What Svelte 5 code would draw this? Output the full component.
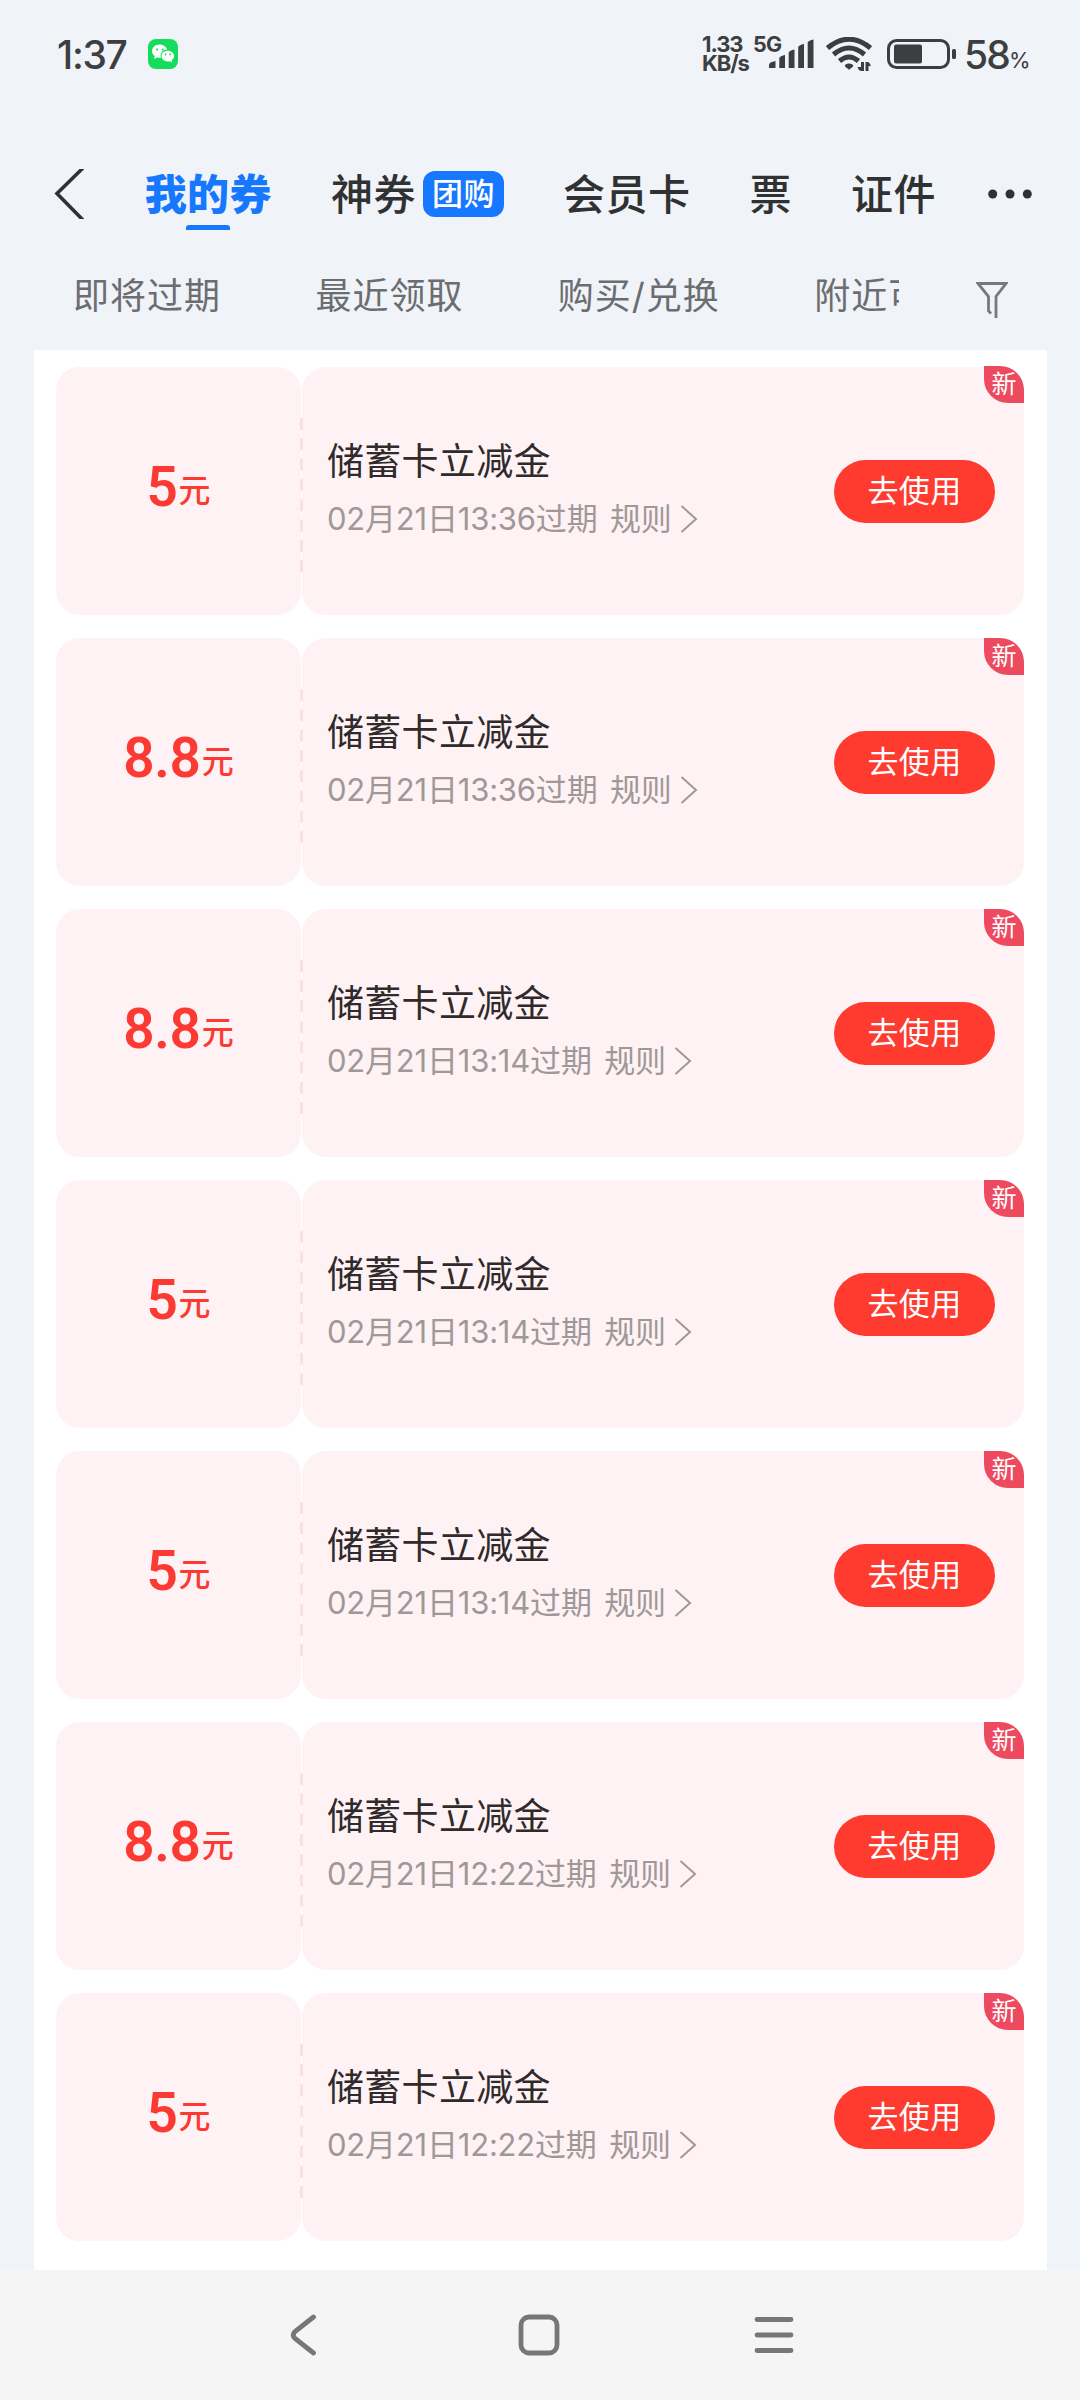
<script lang="ts">
	interface Coupon {
		amount: string;
		expires: string;
	}

	const tabs = [
		{ name: '我的券', active: true },
		{ name: '神券', badge: '团购' },
		{ name: '会员卡' },
		{ name: '票' },
		{ name: '证件' }
	];

	const filters = ['即将过期', '最近领取', '购买/兑换', '附近可用'];

	const title = '储蓄卡立减金';

	const coupons: Coupon[] = [
		{ amount: '5', expires: '02月21日13:36' },
		{ amount: '8.8', expires: '02月21日13:36' },
		{ amount: '8.8', expires: '02月21日13:14' },
		{ amount: '5', expires: '02月21日13:14' },
		{ amount: '5', expires: '02月21日13:14' },
		{ amount: '8.8', expires: '02月21日12:22' },
		{ amount: '5', expires: '02月21日12:22' }
	];
</script>

<div class="screen">
	<header class="status">
		<span class="time">1:37</span>
		<svg class="wechat" width="30" height="30" viewBox="0 0 30 30">
			<rect width="30" height="30" rx="8" fill="#14dc5c" />
			<path
				fill="#fff"
				d="M11.500 5.500C7.300 5.500 4 8.400 4 12c0 2.100 1.100 3.900 2.700 5.100L6 20l3-1.600c1.200.4 2.600.5 4 .3a6 6 0 0 1-.4-2c0-3.500 3-6 6.600-6.100C18.300 7.700 15.200 5.500 11.500 5.500z"
			/>
			<path
				fill="#fff"
				d="M19.700 11.800c-3.500 0-6.200 2.300-6.200 5.300s2.700 5.400 6.200 5.400c.8 0 1.500-.1 2.200-.3l2.300 1.300-.5-2.200c1.500-1 2.400-2.500 2.400-4.200 0-3-2.900-5.300-6.400-5.300z"
			/>
			<g fill="#14dc5c">
				<circle cx="9" cy="10.500" r="1.100" />
				<circle cx="14.500" cy="10.500" r="1.100" />
				<circle cx="17.500" cy="15.500" r=".9" />
				<circle cx="22" cy="15.500" r=".9" />
			</g>
		</svg>
		<div class="speed"><span>1.33</span><span>KB/s</span></div>
		<span class="network">5G</span>
		<svg class="signal" width="45" height="30" viewBox="0 0 45 30" fill="#3c3e41">
			<path
				d="M0 29v-3q0-3 6.500-4v7zM10.300 29V19q1-2 5.700-3v13zM19.700 29V13.500q1-2 5.800-3V29zM29.200 29V8q1-2 5.800-3v24zM38.700 29V3.500q1-2 5.800-3V29z"
			/>
		</svg>
		<svg class="wifi" width="46" height="34" viewBox="0 0 46 34" fill="none" stroke="#3c3e41">
			<path d="M1.500 11Q23-6.500 44.500 11" stroke-width="5" />
			<path d="M7.500 17.500Q23 4.500 38.500 17.500" stroke-width="5" />
			<path d="M13.500 24Q23 16 32.500 24" stroke-width="5" />
			<path
				d="M19.500 27.500q3.500-2 7 0 1.500 1 0 2.500L23 32.800L19.500 30q-1.500-1.500 0-2.500z"
				fill="#3c3e41"
				stroke="none"
			/>
			<path
				d="M35 25h3v9h-3q-3-1-3.500-4H35zM39.500 34v-9h2.800q1.500 1 2.700 4h-2.500v5z"
				fill="#3c3e41"
				stroke="none"
			/>
		</svg>
		<svg class="battery" width="70" height="30" viewBox="0 0 70 30">
			<rect x="1.500" y="1.500" width="60" height="27" rx="8" fill="none" stroke="#3c3e41" stroke-width="3" />
			<rect x="7" y="5.500" width="28" height="19" rx="2" fill="#3c3e41" />
			<rect x="65" y="10" width="4" height="10" rx="1.500" fill="#3c3e41" />
		</svg>
		<span class="level">58</span><span class="percent">%</span>
	</header>

	<nav class="tabs">
		<svg class="back" width="30" height="50" viewBox="0 0 30 50">
			<path d="M29 -1L3 24.500L29 51" fill="none" stroke="#303133" stroke-width="3.600" />
		</svg>
		{#each tabs as tab}
			<div class="tab" class:active={tab.active}>
				{tab.name}
				{#if tab.badge}
					<span class="tab-badge">{tab.badge}</span>
				{/if}
			</div>
		{/each}
		<svg class="more" width="44" height="10" viewBox="0 0 44 10" fill="#303133">
			<circle cx="4.700" cy="5" r="4.500" />
			<circle cx="22" cy="5" r="4.500" />
			<circle cx="39.300" cy="5" r="4.500" />
		</svg>
	</nav>

	<div class="filters">
		<div class="filter-list">
			{#each filters as filter}
				<span>{filter}</span>
			{/each}
		</div>
		<svg class="funnel" width="32" height="38" viewBox="0 0 32 38">
			<path
				d="M15 32.500L12.500 30V15.500L2 2.500H30L20 15.500V37"
				fill="none"
				stroke="#77797c"
				stroke-width="2.800"
			/>
		</svg>
	</div>

	<main class="sheet">
		{#each coupons as coupon}
			<article class="coupon">
				<div class="amount"><b>{coupon.amount}</b><span>元</span></div>
				<div class="detail">
					<div class="info">
						<h2>{title}</h2>
						<p>
							<span>{coupon.expires}过期</span>
							<span class="rule">规则</span>
							<svg width="18" height="30" viewBox="0 0 18 30">
								<path d="M1.500 2L16 15L1.500 28" fill="none" stroke="#9f9899" stroke-width="2" />
							</svg>
						</p>
					</div>
					<button>去使用</button>
				</div>
				<span class="new">新</span>
				<svg class="divider" width="3" height="156" viewBox="0 0 3 156">
					<path d="M1.500 0V156" stroke="#fadfe4" stroke-width="3" stroke-dasharray="12 8.300" />
				</svg>
			</article>
		{/each}
	</main>

	<footer class="system-nav">
		<svg width="26" height="42" viewBox="0 0 26 42">
			<path d="M23.500 3L5 17.500Q1.500 21 5 24.500L23.500 39" />
		</svg>
		<svg width="42" height="42" viewBox="0 0 42 42">
			<rect x="3" y="3" width="36" height="36" rx="8" />
		</svg>
		<svg width="40" height="42" viewBox="0 0 40 42">
			<path d="M3 5.500H37M3 21H37M3 36.500H37" />
		</svg>
	</footer>
</div>

<style>
	:global(body) {
		background: #f0f3f8;
	}

	.screen {
		display: flex;
		flex-direction: column;
		width: 1080px;
		height: 2400px;
		overflow: hidden;
		background: #f0f3f8;
		font-family: Inter, 'Noto Sans CJK SC', sans-serif;
	}

	.status {
		display: flex;
		align-items: center;
		height: 108px;
		padding-left: 57px;
		color: #3c3e41;
		line-height: 1;
	}

	.time {
		width: 91px;
		margin-top: 1px;
		font-size: 39px;
		font-weight: 500;
		letter-spacing: -1.3px;
	}

	.speed {
		display: flex;
		flex-direction: column;
		width: 51px;
		margin: -1px 0 0 524px;
		font-size: 22px;
		font-weight: 700;
		line-height: 18.5px;
		letter-spacing: -1.1px;
	}

	.network {
		width: 16px;
		margin-bottom: 19px;
		font-size: 21.5px;
		font-weight: 700;
		letter-spacing: -0.8px;
		white-space: nowrap;
	}

	.wifi {
		margin-left: 12px;
	}

	.battery {
		margin-left: 15px;
	}

	.level {
		margin-left: 7px;
		font-size: 39px;
		font-weight: 500;
		letter-spacing: -1.8px;
	}

	.percent {
		margin: 11px 0 0;
		font-size: 22px;
	}

	.tabs {
		display: flex;
		align-items: center;
		height: 86px;
		margin-top: 43px;
		padding-left: 54px;
	}

	.back {
		margin-right: 1.5px;
	}

	.tab {
		position: relative;
		display: flex;
		align-items: center;
		margin: 2px 0 0 59.2px;
		color: #303133;
		font-size: 42px;
		font-weight: 500;
		letter-spacing: 0.4px;
		line-height: 60px;
		white-space: nowrap;

		&.active {
			color: #1677ff;
			font-weight: 800;
		}

		&.active::after {
			content: '';
			position: absolute;
			bottom: -5px;
			left: 50%;
			width: 44px;
			height: 5px;
			border-radius: 3px 3px 0 0;
			background: #1677ff;
			transform: translateX(-50%);
		}
	}

	.tab-badge {
		width: 81px;
		height: 46px;
		margin: -2px 0 0 7px;
		border-radius: 12px;
		background: #1677ff;
		color: #fff;
		font-size: 31px;
		line-height: 45px;
		text-align: center;
	}

	.more {
		margin-left: 52px;
	}

	.filters {
		display: flex;
		align-items: center;
		height: 113px;
		padding: 0 71px 0 73px;
	}

	.filter-list {
		display: flex;
		width: 826px;
		padding-top: 4px;
		gap: 94.4px;
		overflow: hidden;
		color: #6b6d70;
		font-size: 36px;
		letter-spacing: 1px;
		line-height: 54px;
		white-space: nowrap;
	}

	.funnel {
		margin: 12px 0 0 77px;
	}

	.sheet {
		display: flex;
		flex: 1;
		flex-direction: column;
		gap: 23px;
		margin: 0 33px 0 34px;
		padding: 17px 23px 29px 22px;
		background: #fff;
	}

	.coupon {
		position: relative;
		display: flex;
		gap: 1px;
		height: 248px;

		& + & .new {
			top: 0;
		}
	}

	.amount {
		display: flex;
		align-items: baseline;
		justify-content: center;
		box-sizing: border-box;
		width: 245px;
		padding-top: 87px;
		border-radius: 24px;
		background: #fff2f4;
		color: #fb3b33;
		line-height: 66px;

		& b {
			font-family: Roboto, sans-serif;
			font-size: 55px;
			font-weight: 600;
			letter-spacing: -0.4px;
		}

		& span {
			position: relative;
			top: -4px;
			margin-left: 1px;
			font-size: 32px;
			font-weight: 500;
		}
	}

	.detail {
		display: flex;
		flex: 1;
		align-items: center;
		justify-content: space-between;
		padding: 0 29px 0 25px;
		border-radius: 24px;
		background: #fff2f4;
	}

	.info {
		margin-top: -3px;
	}

	h2 {
		margin: 0;
		color: #2f2a2b;
		font-size: 37px;
		font-weight: 400;
		letter-spacing: 0.3px;
		line-height: 56px;
	}

	p {
		display: flex;
		align-items: center;
		margin: 2px 0 0;
		color: #9f9899;
		font-size: 31px;
		letter-spacing: -0.2px;
		line-height: 54px;
	}

	.rule {
		margin: 0 8px 0 12.5px;
	}

	button {
		width: 161px;
		height: 63px;
		padding: 0;
		border: 0;
		border-radius: 32px;
		background: #ff3a2f;
		color: #fff;
		font-family: inherit;
		font-size: 31px;
		letter-spacing: 0.3px;
		line-height: 60px;
	}

	.new {
		position: absolute;
		top: -1px;
		right: 0;
		width: 40px;
		height: 37px;
		border-radius: 0 24px 0 24px;
		background: #ee4a5f;
		color: #fff;
		font-size: 25px;
		line-height: 36px;
		text-align: center;
	}

	.divider {
		position: absolute;
		top: 51px;
		left: 244px;
	}

	.system-nav {
		display: flex;
		align-items: center;
		height: 130px;
		padding-left: 290px;
		background: #f5f5f5;

		& svg {
			fill: none;
			stroke: #777;
			stroke-width: 4.8;
			stroke-linecap: round;
		}

		& svg + svg {
			margin-left: 202px;
		}

		& svg:last-child {
			margin-left: 194px;
		}
	}
</style>
